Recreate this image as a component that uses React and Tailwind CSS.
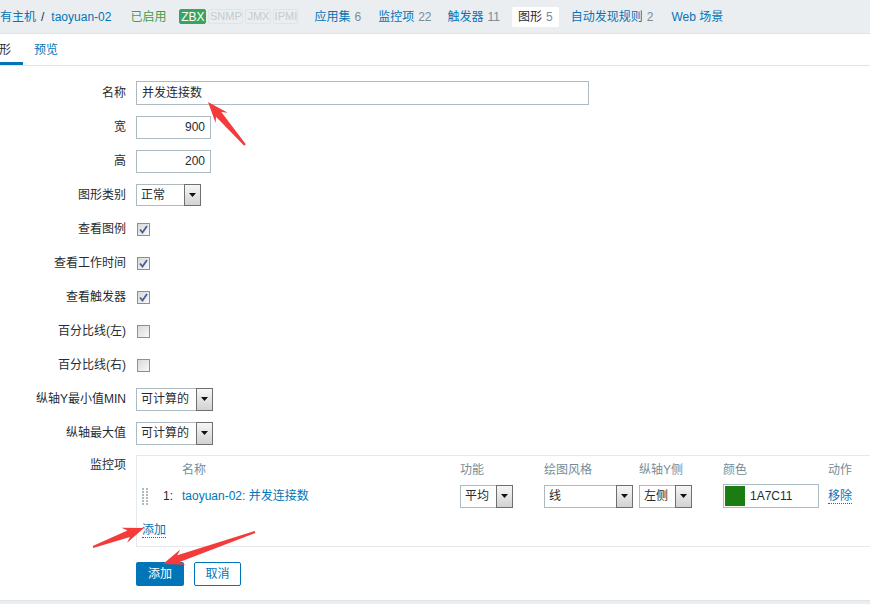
import React from "react";

// red annotation arrow: tip (tx,ty), tail (ex,ey)
const arrowPoints = (tx, ty, ex, ey, head = 21, hw = 8, nw = 3.5, tw = 1) => {
  const dx = ex - tx;
  const dy = ey - ty;
  const len = Math.hypot(dx, dy);
  const ux = dx / len;
  const uy = dy / len;
  const px = -uy;
  const py = ux;
  const nx = tx + ux * head;
  const ny = ty + uy * head;
  const ix = tx + ux * head * 0.78;
  const iy = ty + uy * head * 0.78;
  return [
    [tx, ty],
    [nx + px * hw, ny + py * hw],
    [ix + px * nw, iy + py * nw],
    [ex + px * tw, ey + py * tw],
    [ex - px * tw, ey - py * tw],
    [ix - px * nw, iy - py * nw],
    [nx - px * hw, ny - py * hw],
  ]
    .map((p) => p[0].toFixed(1) + "," + p[1].toFixed(1))
    .join(" ");
};

const Badge = ({ w, active, children }) => (
  <span
    className={
      active
        ? `${w} h-[15px] flex items-center justify-center rounded-[2px] border border-[#3aa35e] bg-[#3aa35e] text-white text-[12px] leading-none`
        : `${w} h-[15px] flex items-center justify-center rounded-[2px] border border-[#dfe4e7] text-[#c2ccd1] text-[11px] leading-none`
    }
  >
    {children}
  </span>
);

const NavItem = ({ label, count, className = "" }) => (
  <span className={`flex items-center whitespace-nowrap ${className}`}>
    <span className="text-[#0275b8]">{label}</span>
    {count && <span className="ml-[4px] text-[#768d99]">{count}</span>}
  </span>
);

const Select = ({ w, value, h = "h-[23px]" }) => (
  <div className={`${w} ${h} flex border border-[#acbbc2] bg-white`}>
    <span className="flex-1 flex items-center pl-[4px] text-[12px] text-[#1f2c33] whitespace-nowrap overflow-hidden">
      {value}
    </span>
    <span className="w-[17px] -my-[1px] -mr-[1px] flex items-center justify-center border border-[#6f6f6f] bg-linear-to-b from-[#f6f6f6] to-[#d2d2d2]">
      <svg width="7" height="4" viewBox="0 0 7 4">
        <polygon points="0,0 7,0 3.5,4" fill="#111" />
      </svg>
    </span>
  </div>
);

const Checkbox = ({ checked }) => (
  <span className="ml-[1px] w-[13px] h-[13px] flex items-center justify-center border border-[#8f8f8f] bg-linear-to-br from-[#d9d9d9] to-[#f8f8f8]">
    {checked && (
      <svg width="9" height="9" viewBox="0 0 9 9">
        <path d="M1 4.5 L3.5 7.5 L8 1" fill="none" stroke="#4a5d9e" strokeWidth="1.8" />
      </svg>
    )}
  </span>
);

const Row = ({ label, children }) => (
  <div className="h-[34px] flex items-center">
    <div className="w-[126px] text-right text-[12px] text-[#1f2c33] whitespace-nowrap">{label}</div>
    <div className="ml-[10px] flex items-center">{children}</div>
  </div>
);

const DragHandle = () => (
  <svg width="6" height="17" viewBox="0 0 6 17">
    {[0, 3, 6, 9, 12, 15].map((y) => (
      <g key={y}>
        <rect x="0" y={y} width="2" height="2" fill="#acbbc2" />
        <rect x="4" y={y} width="2" height="2" fill="#acbbc2" />
      </g>
    ))}
  </svg>
);

const App = () => {
  return (
    <div className="relative w-[870px] h-[604px] overflow-hidden bg-white text-[12px] text-[#1f2c33] font-['Liberation_Sans','Noto_Sans_CJK_SC',sans-serif]">
      {/* top host nav */}
      <div className="h-[34px] flex items-center bg-[#ebeef0] border-b border-[#dfe4e7] whitespace-nowrap">
        <span className="text-[#0275b8]">有主机</span>
        <span className="ml-[5px] mr-[7px] text-[#1f2c33]">/</span>
        <span className="text-[#0275b8]">taoyuan-02</span>
        <span className="ml-[19px] text-[#429e47]">已启用</span>
        <div className="ml-[13px] flex gap-[2px]">
          <Badge w="w-[27px]" active>ZBX</Badge>
          <Badge w="w-[35px]">SNMP</Badge>
          <Badge w="w-[26px]">JMX</Badge>
          <Badge w="w-[25px]">IPMI</Badge>
        </div>
        <NavItem className="ml-[16px]" label="应用集" count="6" />
        <NavItem className="ml-[17px]" label="监控项" count="22" />
        <NavItem className="ml-[16px]" label="触发器" count="11" />
        <span className="ml-[12px] h-[20px] px-[6px] flex items-center bg-white rounded-[2px]">
          <span className="text-[#1f2c33]">图形</span>
          <span className="ml-[4px] text-[#768d99]">5</span>
        </span>
        <NavItem className="ml-[12px]" label="自动发现规则" count="2" />
        <NavItem className="ml-[18px]" label="Web 场景" />
      </div>

      {/* tabs */}
      <div className="h-[32px] flex border-b border-[#dfe4e7]">
        <div className="-ml-[25px] px-[12px] flex items-center pt-[3px] border-b-[3px] border-[#0275b8] text-[#1f2c33]">
          图形
        </div>
        <div className="px-[11px] flex items-center text-[#0275b8]">预览</div>
      </div>

      {/* form */}
      <div className="pt-[10px]">
        <Row label="名称">
          <div className="w-[453px] h-[24px] flex items-center px-[5px] border border-[#acbbc2] text-[12px]">并发连接数</div>
        </Row>
        <Row label="宽">
          <div className="w-[75px] h-[23px] flex items-center justify-end pr-[5px] border border-[#acbbc2]">900</div>
        </Row>
        <Row label="高">
          <div className="w-[75px] h-[23px] flex items-center justify-end pr-[5px] border border-[#acbbc2]">200</div>
        </Row>
        <Row label="图形类别">
          <Select w="w-[65px]" h="h-[22px]" value="正常" />
        </Row>
        <Row label="查看图例">
          <Checkbox checked />
        </Row>
        <Row label="查看工作时间">
          <Checkbox checked />
        </Row>
        <Row label="查看触发器">
          <Checkbox checked />
        </Row>
        <Row label="百分比线(左)">
          <Checkbox />
        </Row>
        <Row label="百分比线(右)">
          <Checkbox />
        </Row>
        <Row label="纵轴Y最小值MIN">
          <Select w="w-[77px]" value="可计算的" />
        </Row>
        <Row label="纵轴最大值">
          <Select w="w-[77px]" value="可计算的" />
        </Row>

        {/* items */}
        <div className="mt-[5px] flex">
          <div className="w-[126px] pt-[3px] leading-[14px] text-right">监控项</div>
          <div className="ml-[10px] -mr-[4px] flex-1 h-[92px] border border-[#e6e9eb]">
            <div className="h-[28px] flex items-center text-[#768d99] whitespace-nowrap">
              <div className="w-[45px]" />
              <div className="w-[278px]">名称</div>
              <div className="w-[84px]">功能</div>
              <div className="w-[95px]">绘图风格</div>
              <div className="w-[84px]">纵轴Y侧</div>
              <div className="w-[105px]">颜色</div>
              <div>动作</div>
            </div>
            <div className="h-[24px] flex items-center whitespace-nowrap">
              <div className="w-[26px] pl-[5px] flex items-center">
                <DragHandle />
              </div>
              <div className="w-[19px]">1:</div>
              <div className="w-[278px] text-[#0275b8]">taoyuan-02: 并发连接数</div>
              <div className="w-[84px]">
                <Select w="w-[53px]" value="平均" />
              </div>
              <div className="w-[95px]">
                <Select w="w-[89px]" value="线" />
              </div>
              <div className="w-[84px]">
                <Select w="w-[53px]" value="左侧" />
              </div>
              <div className="w-[105px]">
                <div className="w-[96px] h-[24px] flex items-center border border-[#acbbc2] p-[1px]">
                  <span className="w-[20px] h-full bg-[#1a7c11]" />
                  <span className="ml-[5px]">1A7C11</span>
                </div>
              </div>
              <div>
                <span className="text-[#0275b8] leading-[14px] border-b border-dotted border-[#0275b8]">移除</span>
              </div>
            </div>
            <div className="mt-[13px] pl-[5px]">
              <span className="text-[#0275b8] leading-[14px] inline-block border-b border-dotted border-[#0275b8]">添加</span>
            </div>
          </div>
        </div>

        {/* buttons */}
        <div className="mt-[15px] ml-[136px] flex gap-[10px]">
          <button className="w-[48px] h-[24px] rounded-[2px] bg-[#0275b8] text-white text-[12px]">添加</button>
          <button className="w-[47px] h-[24px] rounded-[2px] border border-[#0275b8] bg-white text-[#0275b8] text-[12px]">取消</button>
        </div>

        <div className="mt-[14px] h-[10px] bg-[#ebeef0] border-t border-[#dfe4e7]" />
      </div>

      {/* annotation arrows */}
      <svg className="absolute inset-0 pointer-events-none" width="870" height="604">
        <polygon points={arrowPoints(208, 102, 245, 145)} fill="#f33b3b" />
        <polygon points={arrowPoints(144, 528, 93, 547)} fill="#f33b3b" />
        <polygon points={arrowPoints(163, 564, 255, 532)} fill="#f33b3b" />
      </svg>
    </div>
  );
};

export default App;
